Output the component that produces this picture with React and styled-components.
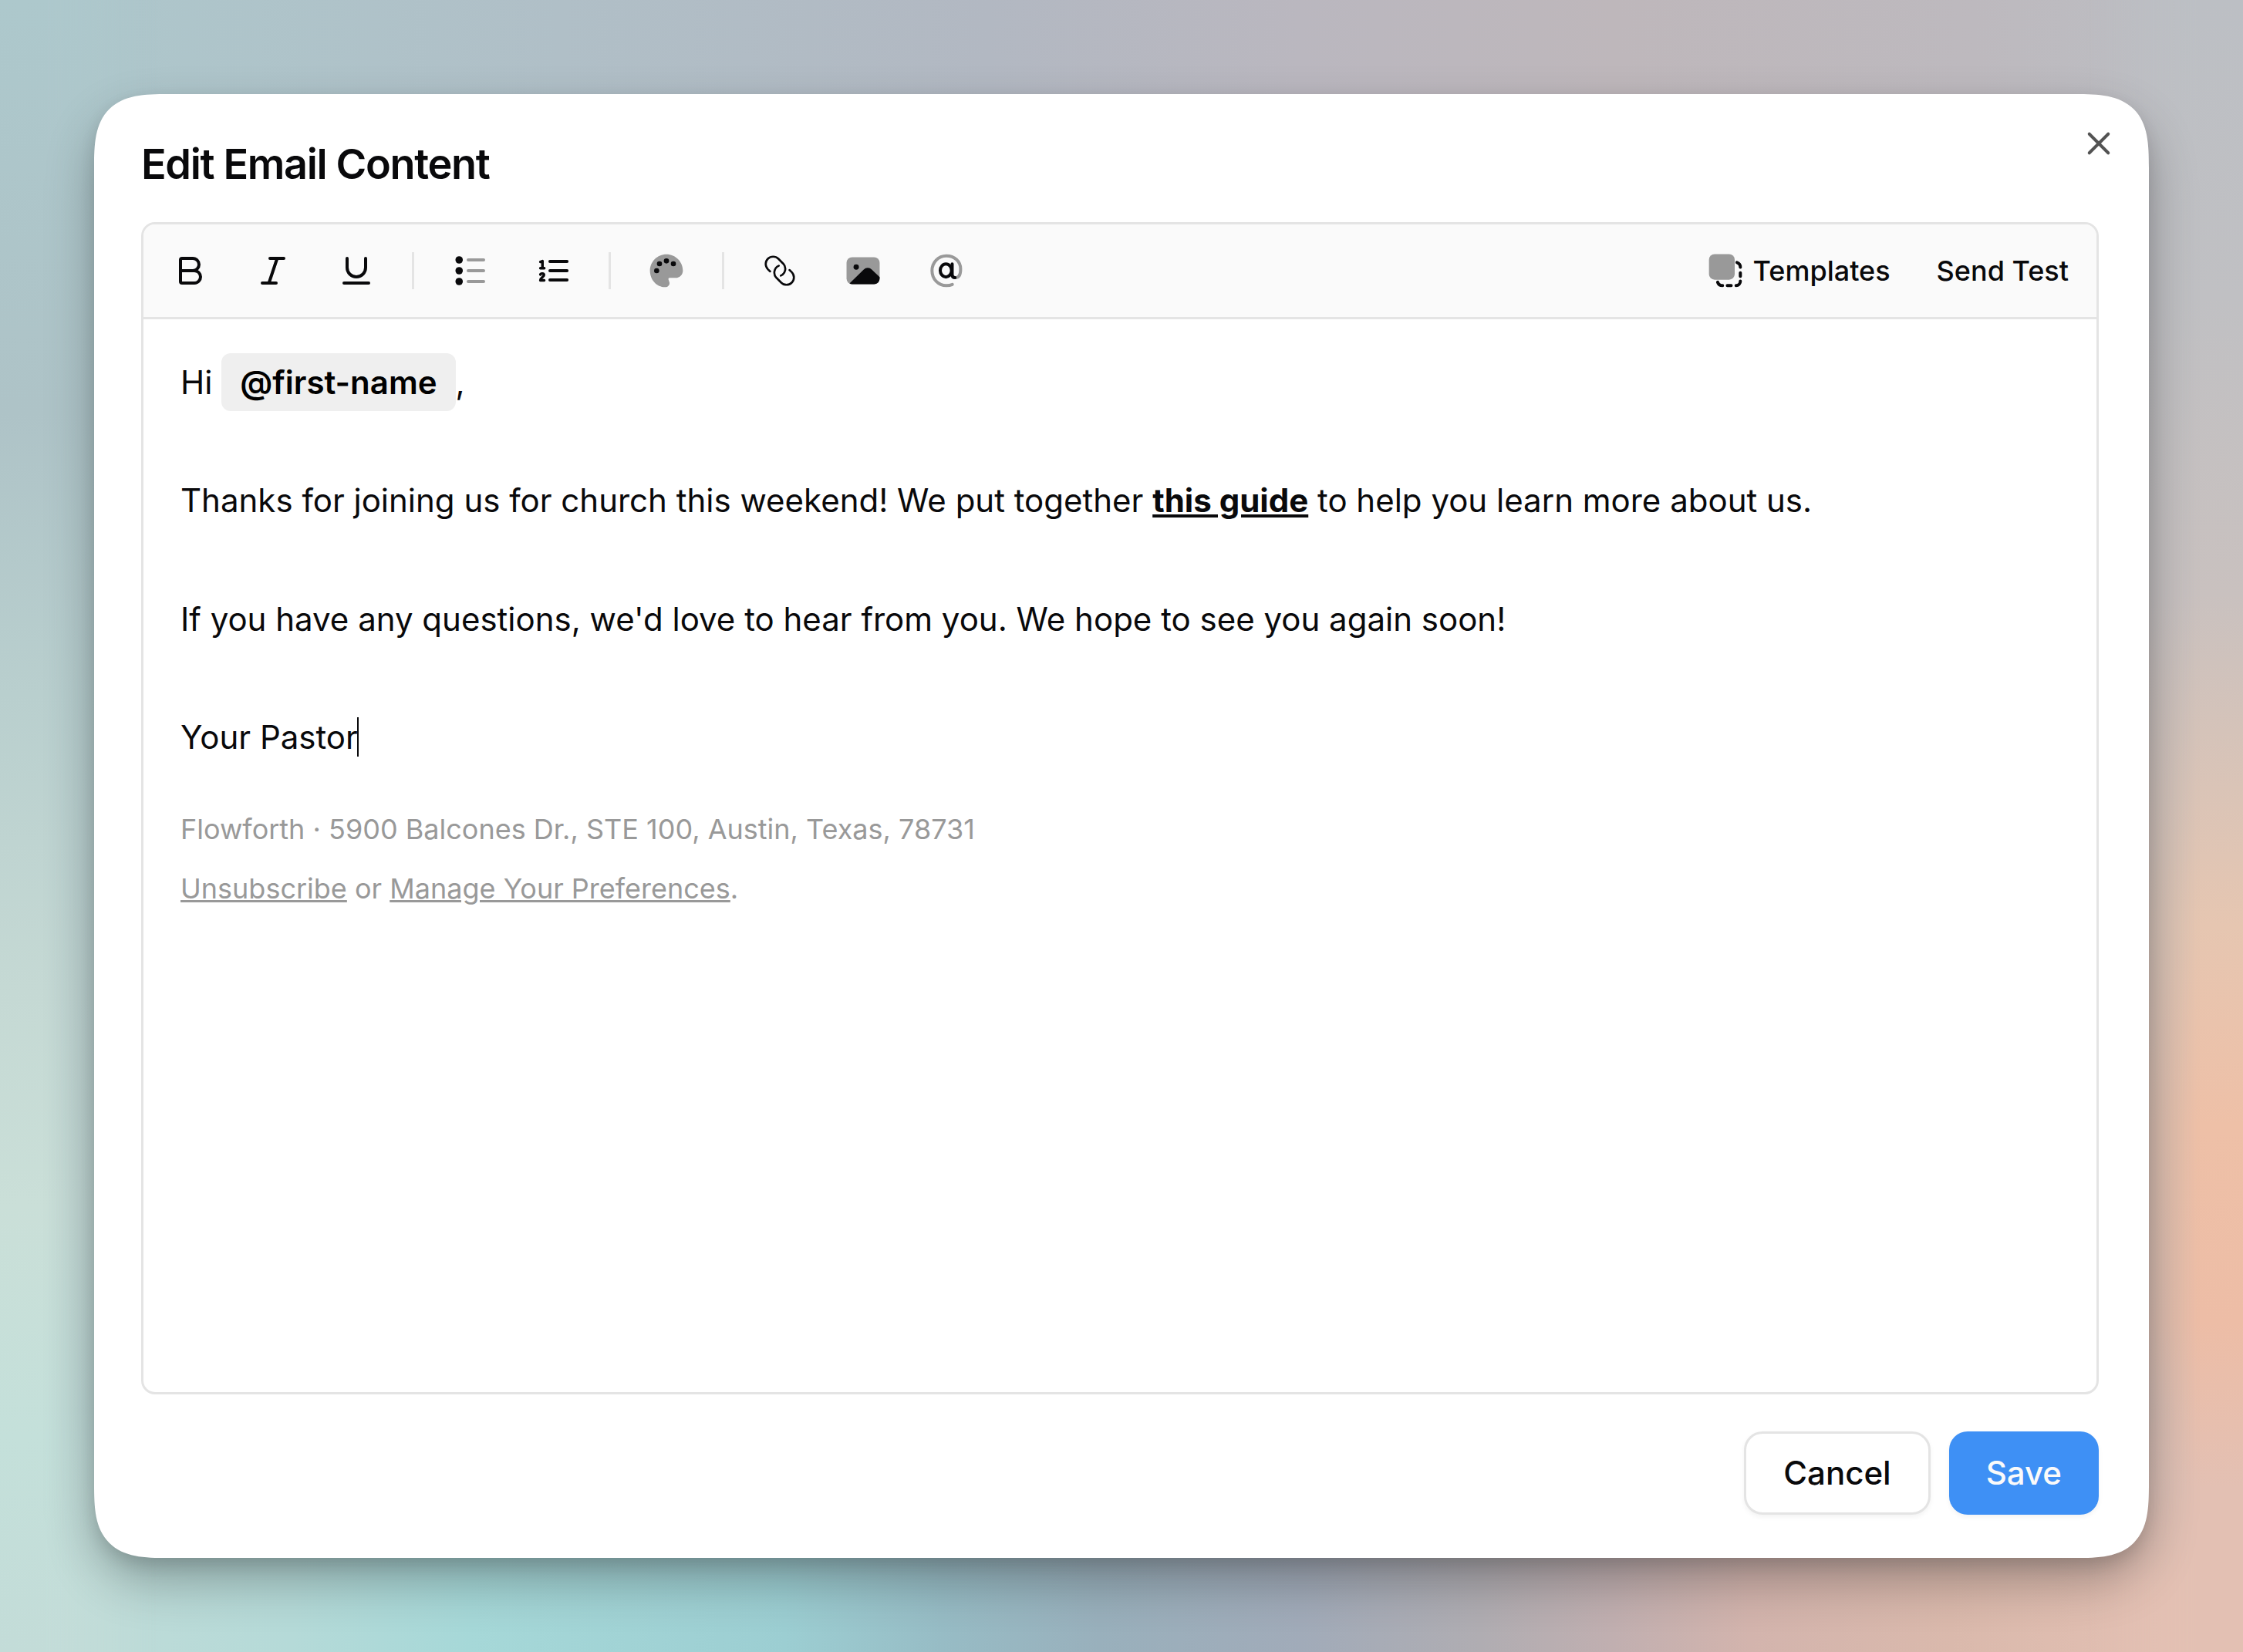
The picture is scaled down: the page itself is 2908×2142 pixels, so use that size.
import React from "react";
import styled, { createGlobalStyle } from 'styled-components';

const GlobalStyle = createGlobalStyle`
	*, *::before, *::after {
		box-sizing: border-box;
	}
	body {
		margin: 0;
		font-family: Inter, "Liberation Sans", sans-serif;
		color: #09090b;
	}
`;
const Page = styled.div`
	display: grid;
	width: 2908px;
	height: 2142px;
	overflow: hidden;
	background: linear-gradient(to right, #adc8cc 0%, #b0bfc7 25%, #b2b8c2 44%, #bab7bf 58%, #beb7bb 72%, #bdb9be 88%, #bcbfc4 100%);
	& > * {
		grid-area: 1 / 1;
	}
`;
const Glow = styled.div`
	background: linear-gradient(${props => props.$direction}, ${props => props.$colors});
	mask-image: linear-gradient(${props => props.$mask});
`;
const Modal = styled.div`
	display: flex;
	flex-direction: column;
	width: 2664px;
	height: 1898px;
	margin: 122px 0 0 122px;
	padding: 40px 65px 56px 61px;
	background: #ffffff;
	border-radius: 68px;
	box-shadow: 0 30px 66px -3px rgba(0, 0, 0, 0.3), 0 8px 20px rgba(0, 0, 0, 0.1);
	z-index: 1;
	@supports (corner-shape: superellipse(1.6)) {
		border-radius: 96px;
		corner-shape: superellipse(1.6);
	}
`;
const Header = styled.div`
	display: flex;
	justify-content: space-between;
	align-items: flex-start;
	height: 126px;
`;
const Title = styled.h2`
	margin: 24px 0 0;
	font-size: 54px;
	font-weight: 600;
	line-height: 54px;
	letter-spacing: -0.025em;
`;
const Close = styled.button`
	display: flex;
	width: 48px;
	height: 48px;
	margin-right: -24px;
	padding: 0;
	border: none;
	background: none;
	color: #535353;
`;
const Editor = styled.div`
	display: flex;
	flex-direction: column;
	height: 1520px;
	border: 3px solid #e4e4e4;
	border-radius: 18px;
	overflow: hidden;
`;
const Toolbar = styled.div`
	display: flex;
	align-items: center;
	justify-content: space-between;
	height: 123px;
	padding: 0 12px;
	border-bottom: 3px solid #e4e4e4;
	background: #fafafa;
`;
const Group = styled.div`
	display: flex;
	align-items: center;
	gap: 12px;
`;
const IconButton = styled.button`
	display: flex;
	align-items: center;
	justify-content: center;
	width: 96px;
	height: 96px;
	padding: 0;
	border: none;
	background: none;
	color: inherit;
`;
const TextButton = styled(IconButton)`
	width: auto;
	gap: 12px;
	padding: 0 24px;
	font: 500 36px/48px Inter, "Liberation Sans", sans-serif;
`;
const Separator = styled.span`
	width: 3px;
	height: 48px;
	margin: 0 12px;
	background: #e4e4e4;
`;
const Content = styled.div`
	flex: 1;
	padding: 44px 48px;
	font-size: 42px;
	line-height: 76.7px;
`;
const Line = styled.p`
	height: 76.7px;
	margin: 0 0 76.7px;
	white-space: nowrap;
	&:last-of-type {
		margin-bottom: 0;
	}
`;
const Mention = styled.span`
	display: inline-block;
	height: 75px;
	padding: 0 24px;
	border-radius: 12px;
	background: #efefef;
	color: #000000;
	font-weight: 600;
	line-height: 75px;
	vertical-align: top;
`;
const GuideLink = styled.a`
	font-weight: 700;
	text-decoration: underline;
`;
const Caret = styled.span`
	display: inline-block;
	width: 2px;
	height: 51px;
	margin-left: -1px;
	background: #09090b;
	vertical-align: -10px;
`;
const Legal = styled.div`
	margin-top: 42px;
	color: #999999;
	font-size: 36px;
	a {
		text-decoration: underline;
	}
`;
const Footer = styled.div`
	display: flex;
	justify-content: flex-end;
	gap: 24px;
	margin-top: 48px;
`;
const Button = styled.button`
	height: 108px;
	padding: 0 48px;
	border: ${props => props.$primary ? 'none' : '3px solid #e4e4e4'};
	border-radius: 24px;
	background: ${props => props.$primary ? '#3e90f5' : '#ffffff'};
	color: ${props => props.$primary ? '#fafafa' : '#09090b'};
	box-shadow: 0 3px 6px rgba(0, 0, 0, 0.05);
	font: 500 42px/60px Inter, "Liberation Sans", sans-serif;
`;
const Svg = styled.svg`
	display: block;
	flex: none;
	width: 48px;
	height: 48px;
	fill: none;
	stroke: currentColor;
	stroke-width: ${props => props.$stroke || 1.5};
	stroke-linecap: round;
	stroke-linejoin: round;
	.muted {
		stroke: #999999;
	}
	.solid {
		fill: currentColor;
		stroke: none;
	}
	.mutedSolid {
		fill: #999999;
		stroke: none;
	}
`;

const Icon = ({ children, stroke }) => (
	<Svg viewBox="0 0 18 18" $stroke={stroke} aria-hidden="true">{children}</Svg>
);

const CloseIcon = () => (
	<Icon><path d="M4.4 4.4l9.2 9.2M13.6 4.4l-9.2 9.2"/></Icon>
);
const BoldIcon = () => (
	<Icon>
		<path d="M4.5 9H10.5a3 3 0 0 0 0-6H5.25a.75.75 0 0 0-.75.75v10.5c0 .41.34.75.75.75h6a3 3 0 0 0 0-6"/>
	</Icon>
);
const ItalicIcon = () => (
	<Icon><path d="M7.5 3h6.75M3.75 15h6.75M11 3L7 15"/></Icon>
);
const UnderlineIcon = () => (
	<Icon><path d="M4.5 3v4.5a4.5 4.5 0 0 0 9 0V3M3 15h12"/></Icon>
);
const BulletListIcon = () => (
	<Icon>
		{[3.75, 9, 14.25].map(y => (
			<g key={y}>
				<circle className="solid" cx="3.85" cy={y} r="1.8"/>
				<path className="muted" d={`M8.25 ${y}h7.5`}/>
			</g>
		))}
	</Icon>
);
const NumberListIcon = () => (
	<Icon>
		<path d="M7.5 4.5h8.3M7.5 9h8.3M7.5 13.5h8.3"/>
		<path strokeWidth="1.3" d="M2.85 4.7l1-.35v3.4M2.85 7.75h1.9"/>
		<path strokeWidth="1.3" d="M2.85 10.9c.2-.75 1.75-.75 1.75.2 0 .9-1.65 1.2-1.75 2.6h1.85"/>
	</Icon>
);
const PaletteIcon = () => (
	<Icon>
		<path className="mutedSolid" d="M9 1C4.58 1 1 4.58 1 9s3.3 8 7.3 8c1.5 0 2.6-1.2 2.1-2.6l-.4-1.1c-.1-.45.1-.8.55-.8H13.5c2 0 3.5-1.6 3.5-3.5C17 4.6 13.4 1 9 1z"/>
		<circle className="solid" cx="9" cy="4.25" r="1.25"/>
		<circle className="solid" cx="5.62" cy="5.62" r="1.25"/>
		<circle className="solid" cx="12.38" cy="5.62" r="1.25"/>
		<circle className="solid" cx="4.25" cy="9" r="1.25"/>
	</Icon>
);
const LinkIcon = () => (
	<Icon stroke={1}>
		<path d="M4.3 9.35L3.2 8.3A3.6 3.6 0 0 1 8.3 3.2L10.7 5.6A3.65 3.65 0 0 1 9.5 11.4"/>
		<path d="M13.7 8.65L14.8 9.7A3.6 3.6 0 0 1 9.7 14.8L7.3 12.4A3.65 3.65 0 0 1 8.5 6.6"/>
	</Icon>
);
const ImageIcon = () => (
	<Icon>
		<rect className="mutedSolid" x="0.95" y="2.4" width="16.1" height="13.2" rx="2.75"/>
		<circle className="solid" cx="5.65" cy="7.25" r="1.3"/>
		<path className="solid" d="M2.4 15.2L9.3 8.4a2.75 2.75 0 0 1 3.9 0L17.05 12.1v.75a2.75 2.75 0 0 1-2.75 2.75H3.7c-.5 0-.9-.15-1.3-.4z"/>
	</Icon>
);
const MentionIcon = () => (
	<Icon>
		<path className="muted" d="M11.9 15.7C11 16.1 10.1 16.25 9 16.25 5 16.25 2 13 2 9s3-7.25 7-7.25c3.9 0 6.9 2.75 6.9 6.45 0 2.4-.6 4.1-2.2 4.15"/>
		<ellipse cx="8.75" cy="8.9" rx="2.75" ry="3.15"/>
		<path d="M11.8 5.75v5.1c0 .9.5 1.5 1.4 1.5"/>
	</Icon>
);
const TemplatesIcon = () => (
	<Icon>
		<rect className="mutedSolid" x="1" y="0.9" width="12.5" height="12.5" rx="2.75"/>
		<path d="M14.6 5c.9.3 1.65 1.15 1.65 2.3M16.25 10v1.7M16.25 14.1c0 1.2-.9 2.15-2.1 2.15M11.8 16.25H9.9M7.6 16.25c-1.15 0-2.05-.6-2.4-1.7"/>
	</Icon>
);

const tools = [
	[['Bold', BoldIcon], ['Italic', ItalicIcon], ['Underline', UnderlineIcon]],
	[['Bulleted list', BulletListIcon], ['Numbered list', NumberListIcon]],
	[['Color', PaletteIcon]],
	[['Link', LinkIcon], ['Image', ImageIcon], ['Mention', MentionIcon]],
];

const App = () => (
	<Page>
		<GlobalStyle/>
		<Glow
			$direction="to right"
			$colors="#c3dcd8 0%, #b5dad8 13%, #a6d8d8 21%, #9cced2 35%, #97bcc5 42%, #99b0bc 49%, #a1abb9 58%, #b0adb2 66%, #c1afb0 72%, #d3b4ad 78%, #dab9ac 87%, #e3c0b3 97%"
			$mask="to bottom, transparent 85%, #000000 96%"
		/>
		<Glow
			$direction="to bottom"
			$colors="#adc8cc 0%, #aec3c7 25%, #b9cfce 42%, #c5d9d4 60%, #cadfd8 73%, #c4e0da 87%, #c3dcd8 100%"
			$mask="to right, #000000 2%, transparent 7%"
		/>
		<Glow
			$direction="to bottom"
			$colors="#bcbfc4 0%, #c0c0c3 18%, #c9c1bf 36%, #e6c6b1 56%, #eec0a7 68%, #edbda6 80%, #e3c0b3 90%, #e3c0b3 100%"
			$mask="to left, #000000 2%, transparent 7%"
		/>
		<Modal>
			<Header>
				<Title>Edit Email Content</Title>
				<Close aria-label="Close"><CloseIcon/></Close>
			</Header>
			<Editor>
				<Toolbar>
					<Group>
						{tools.map((group, index) => (
							<React.Fragment key={index}>
								{index > 0 && <Separator/>}
								{group.map(([label, ToolIcon]) => (
									<IconButton key={label} aria-label={label}><ToolIcon/></IconButton>
								))}
							</React.Fragment>
						))}
					</Group>
					<Group>
						<TextButton><TemplatesIcon/>Templates</TextButton>
						<TextButton>Send Test</TextButton>
					</Group>
				</Toolbar>
				<Content>
					<Line>Hi <Mention>@first-name</Mention>,</Line>
					<Line>
						Thanks for joining us for church this weekend! We put together <GuideLink>this guide</GuideLink> to help you learn more about us.
					</Line>
					<Line>If you have any questions, we'd love to hear from you. We hope to see you again soon!</Line>
					<Line>Your Pastor<Caret/></Line>
					<Legal>
						<div>Flowforth · 5900 Balcones Dr., STE 100, Austin, Texas, 78731</div>
						<div><a>Unsubscribe</a> or <a>Manage Your Preferences</a>.</div>
					</Legal>
				</Content>
			</Editor>
			<Footer>
				<Button>Cancel</Button>
				<Button $primary>Save</Button>
			</Footer>
		</Modal>
	</Page>
);

export default App;
